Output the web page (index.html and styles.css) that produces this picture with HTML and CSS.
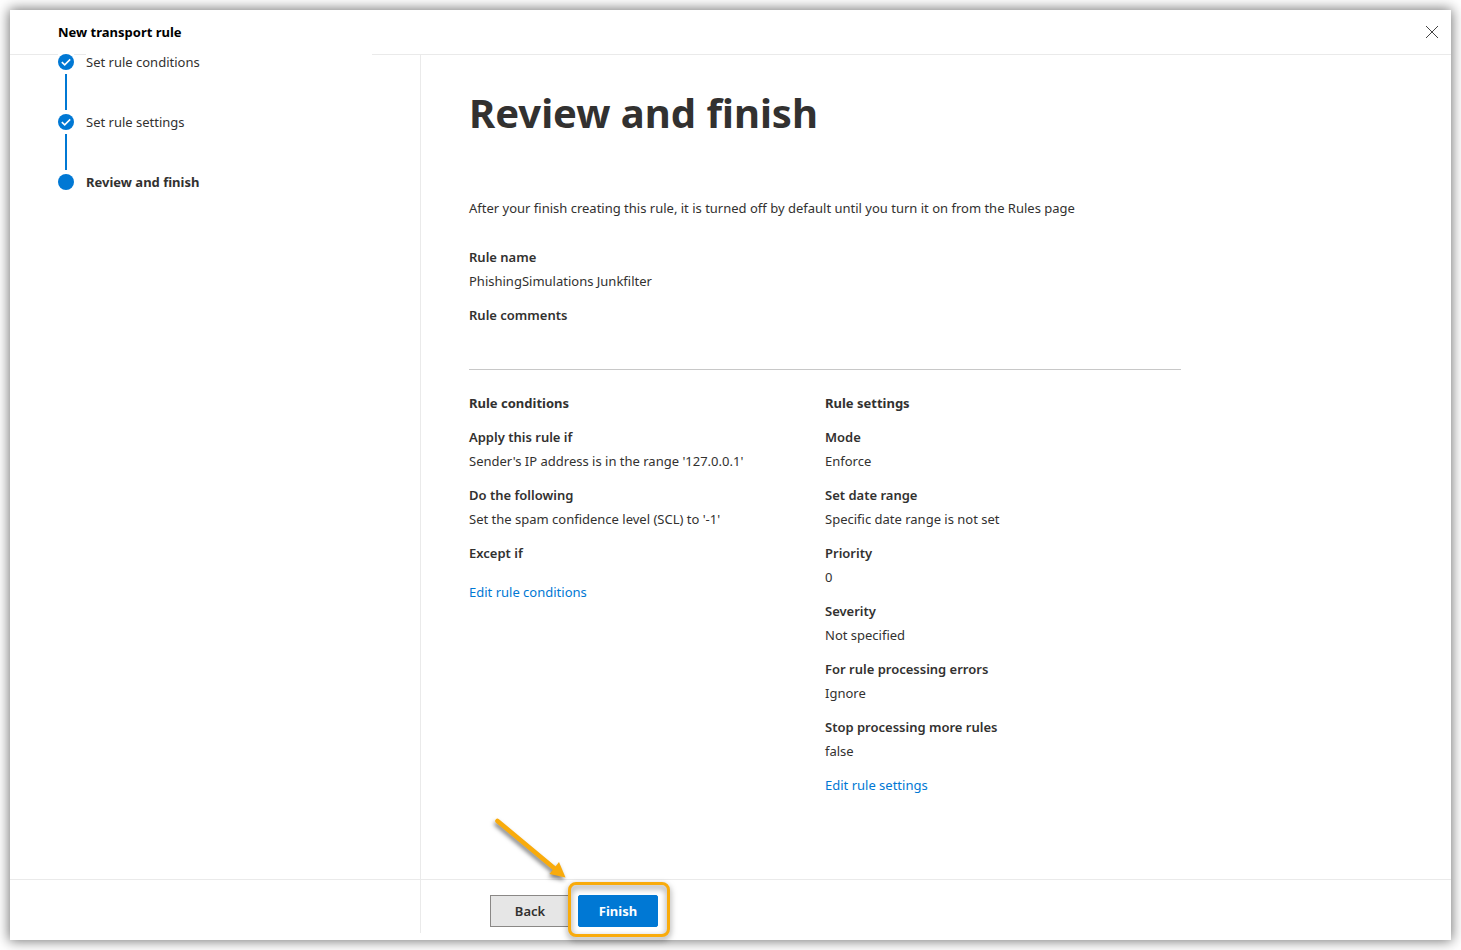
FILE: index.html
```
<!DOCTYPE html>
<html lang="en">
<head>
  <meta charset="UTF-8">
  <meta name="viewport" content="width=device-width, initial-scale=1.0">
  <title>New transport rule</title>
  <link rel="stylesheet" href="styles.css">
</head>
<body>
  <div class="panel">
    <header class="panel-header">
      <h2>New transport rule</h2>
      <button class="close-button" type="button" aria-label="Close">
        <svg width="12" height="12" viewBox="0 0 12 12" fill="none" stroke="#444" stroke-width="1">
          <path d="M0 0L12 12M12 0L0 12"></path>
        </svg>
      </button>
    </header>

    <div class="wizard">
      <nav class="steps" aria-label="Steps">
        <ol>
          <li class="step">
            <svg class="step-icon" width="16" height="16" viewBox="0 0 16 16">
              <circle cx="8" cy="8" r="8" fill="#0078d4"></circle>
              <path d="M3.8 8.2L6.7 10.8L12.2 5.4" fill="none" stroke="#fff" stroke-width="1.6"></path>
            </svg>
            <span class="step-label">Set rule conditions</span>
          </li>
          <li class="step">
            <svg class="step-icon" width="16" height="16" viewBox="0 0 16 16">
              <circle cx="8" cy="8" r="8" fill="#0078d4"></circle>
              <path d="M3.8 8.2L6.7 10.8L12.2 5.4" fill="none" stroke="#fff" stroke-width="1.6"></path>
            </svg>
            <span class="step-label">Set rule settings</span>
          </li>
          <li class="step current" aria-current="step">
            <svg class="step-icon" width="16" height="16" viewBox="0 0 16 16">
              <circle cx="8" cy="8" r="8" fill="#0078d4"></circle>
            </svg>
            <span class="step-label">Review and finish</span>
          </li>
        </ol>
      </nav>

      <main class="content">
        <h1>Review and finish</h1>
        <p class="intro">After your finish creating this rule, it is turned off by default until you turn it on from the Rules page</p>

        <dl class="summary">
          <dt>Rule name</dt>
          <dd>PhishingSimulations Junkfilter</dd>
          <dt>Rule comments</dt>
          <dd></dd>
        </dl>

        <div class="columns">
          <section>
            <h3>Rule conditions</h3>
            <dl>
              <dt>Apply this rule if</dt>
              <dd>Sender's IP address is in the range '127.0.0.1'</dd>
              <dt>Do the following</dt>
              <dd>Set the spam confidence level (SCL) to '-1'</dd>
              <dt>Except if</dt>
              <dd></dd>
            </dl>
            <a href="#conditions">Edit rule conditions</a>
          </section>
          <section>
            <h3>Rule settings</h3>
            <dl>
              <dt>Mode</dt>
              <dd>Enforce</dd>
              <dt>Set date range</dt>
              <dd>Specific date range is not set</dd>
              <dt>Priority</dt>
              <dd>0</dd>
              <dt>Severity</dt>
              <dd>Not specified</dd>
              <dt>For rule processing errors</dt>
              <dd>Ignore</dd>
              <dt>Stop processing more rules</dt>
              <dd>false</dd>
            </dl>
            <a href="#settings">Edit rule settings</a>
          </section>
        </div>
      </main>

      <footer class="actions">
        <button class="button" type="button">Back</button>
        <div class="callout">
          <button class="button primary" type="button">Finish</button>
          <svg class="callout-arrow" width="80" height="70" viewBox="0 0 80 70">
            <path d="M6.5 7L63 54" stroke="#f9ab0b" stroke-width="4.6" stroke-linecap="round"></path>
            <path d="M74.5 63.5L58.5 60L68 48Z" fill="#f9ab0b"></path>
          </svg>
        </div>
      </footer>
    </div>
  </div>
</body>
</html>
```
FILE: styles.css
```
* {
  margin: 0;
  padding: 0;
  box-sizing: border-box;
}

:root {
  --blue: #0078d4;
  --text: #323130;
  --line: #eaeaea;
  --callout: #f9ab0b;
}

body {
  font-family: "Segoe UI", "Noto Sans", sans-serif;
  font-size: 13px;
  line-height: 24px;
  color: var(--text);
  background-color: #fff;
  min-height: 100vh;
  display: flex;
  padding: 10px;
}

.panel {
  flex: 1;
  display: flex;
  flex-direction: column;
  background-color: #fff;
  box-shadow: 0 0 12px 1px rgba(0, 0, 0, 0.55);
}

.panel-header {
  display: flex;
  align-items: center;
  justify-content: space-between;
  height: 45px;
  padding: 0 12px 0 48px;
  border-bottom: 1px solid var(--line);
}

.panel-header h2 {
  font-size: 13px;
  font-weight: 700;
  color: #000;
}

.close-button {
  display: flex;
  padding: 1px;
  border: none;
  background: none;
  cursor: pointer;
}

/* The footer rule runs under the sidebar, so both share the last row */
.wizard {
  flex: 1;
  display: grid;
  grid-template-columns: 411px 1fr;
  grid-template-rows: 1fr auto;
}

.steps {
  grid-area: 1 / 1 / 3 / 2;
  margin-bottom: 7px;
  padding: 0 48px;
  border-right: 1px solid var(--line);
}

.steps ol {
  list-style: none;
  margin-top: -5px;
}

.step {
  position: relative;
  display: flex;
  align-items: center;
  gap: 12px;
  height: 24px;
  margin-bottom: 36px;
}

.step-icon {
  flex: none;
  background-color: #fff;
}

.step-label {
  flex: 1;
  background-color: #fff;
}

.step:not(:last-child)::after {
  content: "";
  position: absolute;
  top: 24px;
  left: 7px;
  width: 2px;
  height: 36px;
  background-color: var(--blue);
}

.step.current {
  font-weight: 700;
}

.content {
  grid-area: 1 / 2;
  padding: 30px 48px;
}

h1 {
  font-size: 40px;
  line-height: 56px;
  font-weight: 700;
}

.intro {
  margin-top: 55px;
}

.summary {
  max-width: 712px;
  margin-top: 25px;
  padding-bottom: 27px;
  border-bottom: 1px solid #c8c8c8;
}

dt {
  font-weight: 600;
}

dd {
  min-height: 5px;
  margin-bottom: 10px;
}

.columns {
  display: grid;
  grid-template-columns: 1fr 1fr;
  max-width: 712px;
  margin-top: 21px;
}

h3 {
  font-size: 13px;
  font-weight: 700;
  margin-bottom: 10px;
}

a {
  color: var(--blue);
  text-decoration: none;
}

a:hover {
  text-decoration: underline;
}

.actions {
  grid-area: 2 / 1 / 3 / 3;
  display: flex;
  gap: 8px;
  padding: 15px 480px 13px;
  border-top: 1px solid var(--line);
}

.button {
  width: 80px;
  height: 32px;
  border: 1px solid #8a8886;
  background-color: #e6e6e6;
  color: var(--text);
  font: inherit;
  font-weight: 600;
  cursor: pointer;
}

.button.primary {
  display: block;
  border-color: var(--blue);
  border-radius: 2px;
  background-color: var(--blue);
  color: #fff;
  font-weight: 700;
}

/* Orange frame and arrow pointing at the finish button */
.callout {
  position: relative;
}

.callout::after {
  content: "";
  position: absolute;
  inset: -13px -12px -10px -10px;
  border: 3px solid var(--callout);
  border-radius: 8px;
  filter: drop-shadow(0 3px 3px rgba(0, 0, 0, 0.5));
  pointer-events: none;
}

.callout-arrow {
  position: absolute;
  right: 87px;
  bottom: 43px;
  filter: drop-shadow(-1px 3px 2px rgba(0, 0, 0, 0.5));
  pointer-events: none;
}
```
